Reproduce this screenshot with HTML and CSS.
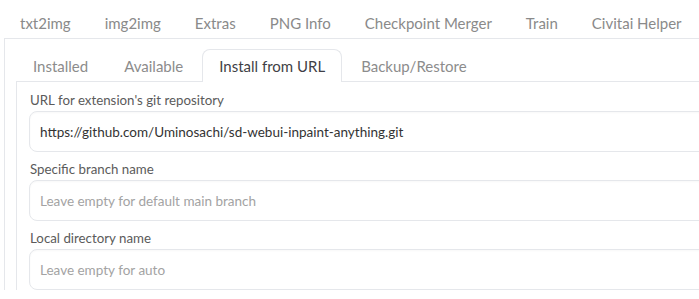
FILE: index.html
```html
<!DOCTYPE html>
<html>
<head>
<meta charset="utf-8">
<link rel="stylesheet" href="styles.css">
</head>
<body>
<div class="app">
  <nav class="top-tabs">
    <span class="tab">txt2img</span>
    <span class="tab">img2img</span>
    <span class="tab">Extras</span>
    <span class="tab">PNG Info</span>
    <span class="tab">Checkpoint Merger</span>
    <span class="tab">Train</span>
    <span class="tab">Civitai Helper</span>
  </nav>
  <div class="outer-panel">
    <nav class="sub-tabs">
      <span class="subtab">Installed</span>
      <span class="subtab">Available</span>
      <span class="subtab active">Install from URL</span>
      <span class="subtab">Backup/Restore</span>
    </nav>
    <div class="inner-panel">
      <label class="field">
        <span class="label">URL for extension's git repository</span>
        <input class="input" type="text" value="https://github.com/Uminosachi/sd-webui-inpaint-anything.git">
      </label>
      <label class="field">
        <span class="label">Specific branch name</span>
        <input class="input" type="text" placeholder="Leave empty for default main branch">
      </label>
      <label class="field">
        <span class="label">Local directory name</span>
        <input class="input" type="text" placeholder="Leave empty for auto">
      </label>
    </div>
  </div>
</div>
</body>
</html>
```

FILE: styles.css
```css
html, body {
  margin: 0;
  padding: 0;
  background: #ffffff;
  overflow: hidden;
}
body {
  font-family: "Lato", "Noto Sans", sans-serif;
  font-size: 15px;
  width: 699px;
  height: 299px;
}
.app {
  padding-left: 4px;
}
.top-tabs {
  display: flex;
  height: 38px;
  align-items: center;
  white-space: nowrap;
}
.tab {
  padding: 0 17px;
  color: #8a8a8a;
  line-height: 20px;
  margin-top: 8px;
}
.tab:first-child {
  padding-left: 16px;
}
.outer-panel {
  border-left: 1px solid #e5e7eb;
  border-top: 1px solid #e5e7eb;
  padding: 10px 0 0 11px;
}
.sub-tabs {
  display: flex;
  height: 32px;
  white-space: nowrap;
}
.subtab {
  padding: 0 16px;
  color: #8c8c8c;
  line-height: 32px;
  border: 1px solid transparent;
  border-bottom: none;
  border-radius: 8px 8px 0 0;
  margin-right: 2px;
}
.subtab.active {
  color: #3f3f46;
  border-color: #e5e7eb;
  background: #ffffff;
  position: relative;
  margin-bottom: -1px;
  height: 32px;
}
.inner-panel {
  border-left: 1px solid #e5e7eb;
  border-top: 1px solid #e5e7eb;
  padding: 8px 0 0 12px;
  display: flex;
  flex-direction: column;
  gap: 7px;
}
.field {
  display: flex;
  flex-direction: column;
}
.label {
  color: #5b5b5b;
  font-size: 13.3px;
  line-height: 20px;
  padding-left: 1px;
  margin-bottom: 1px;
}
.input {
  box-sizing: border-box;
  width: 700px;
  height: 41px;
  border: 1px solid #e5e7eb;
  border-radius: 8px;
  padding: 0 10px;
  font-family: inherit;
  font-size: 13.5px;
  color: #333333;
  background: #ffffff;
  outline: none;
  box-shadow: inset 0 1px 2px rgba(0,0,0,0.03);
}
.input::placeholder {
  color: #a3a3a3;
}
```
